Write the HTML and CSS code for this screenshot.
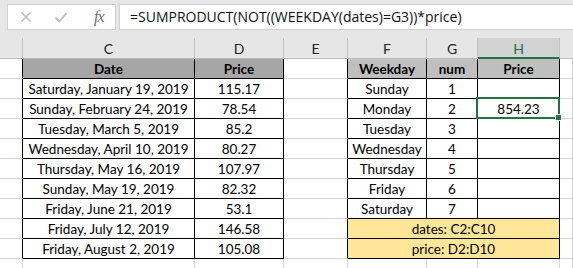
FILE: index.html
```html
<!DOCTYPE html>
<html>
<head>
<meta charset="utf-8">
<link rel="stylesheet" href="styles.css">
</head>
<body>
<div class="topbar">
  <div class="iconbox">
    <svg class="ic" width="20" height="20" viewBox="0 0 20 20"><path d="M5.5 5.5 L14.5 14.5 M14.5 5.5 L5.5 14.5" stroke="#bdbdbd" stroke-width="1.6" fill="none"/></svg>
    <svg class="ic" width="20" height="20" viewBox="0 0 20 20"><path d="M4.5 10.5 L8.5 14.5 L15.5 6" stroke="#bdbdbd" stroke-width="1.8" fill="none"/></svg>
    <span class="fx">fx</span>
  </div>
  <div class="formula">=SUMPRODUCT(NOT((WEEKDAY(dates)=G3))*price)</div>
</div>
<div class="sheet">
  <div class="ch"></div><div class="ch">C</div><div class="ch">D</div><div class="ch">E</div><div class="ch">F</div><div class="ch">G</div><div class="ch sel">H</div><div class="ch last"></div>

  <div class="c rb"></div><div class="c rb bb hd">Date</div><div class="c rb bb hd">Price</div><div class="c rb"></div><div class="c rb bb hd2">Weekday</div><div class="c rb bb hd2">num</div><div class="c rb bb hd2">Price</div><div class="c"></div>

  <div class="c rb"></div><div class="c rb bb">Saturday, January 19, 2019</div><div class="c rb bb">115.17</div><div class="c rb"></div><div class="c rb bb">Sunday</div><div class="c rb bb">1</div><div class="c rb bb"></div><div class="c"></div>

  <div class="c rb"></div><div class="c rb bb">Sunday, February 24, 2019</div><div class="c rb bb">78.54</div><div class="c rb"></div><div class="c rb bb">Monday</div><div class="c rb bb">2</div><div class="c rb bb active">854.23<span class="selbox"><span class="handle"></span></span></div><div class="c"></div>

  <div class="c rb"></div><div class="c rb bb">Tuesday, March 5, 2019</div><div class="c rb bb">85.2</div><div class="c rb"></div><div class="c rb bb">Tuesday</div><div class="c rb bb">3</div><div class="c rb bb"></div><div class="c"></div>

  <div class="c rb"></div><div class="c rb bb">Wednesday, April 10, 2019</div><div class="c rb bb">80.27</div><div class="c rb"></div><div class="c rb bb">Wednesday</div><div class="c rb bb">4</div><div class="c rb bb"></div><div class="c"></div>

  <div class="c rb"></div><div class="c rb bb">Thursday, May 16, 2019</div><div class="c rb bb">107.97</div><div class="c rb"></div><div class="c rb bb">Thursday</div><div class="c rb bb">5</div><div class="c rb bb"></div><div class="c"></div>

  <div class="c rb"></div><div class="c rb bb">Sunday, May 19, 2019</div><div class="c rb bb">82.32</div><div class="c rb"></div><div class="c rb bb">Friday</div><div class="c rb bb">6</div><div class="c rb bb"></div><div class="c"></div>

  <div class="c rb"></div><div class="c rb bb">Friday, June 21, 2019</div><div class="c rb bb">53.1</div><div class="c rb"></div><div class="c rb bb">Saturday</div><div class="c rb bb">7</div><div class="c rb bb"></div><div class="c"></div>

  <div class="c rb"></div><div class="c rb bb">Friday, July 12, 2019</div><div class="c rb bb">146.58</div><div class="c rb"></div><div class="c rb bb note span3">dates: C2:C10</div><div class="c"></div>

  <div class="c rb"></div><div class="c rb bb">Friday, August 2, 2019</div><div class="c rb bb">105.08</div><div class="c rb"></div><div class="c rb bb note span3">price: D2:D10</div><div class="c"></div>

  <div class="c"></div><div class="c"></div><div class="c"></div><div class="c"></div><div class="c"></div><div class="c"></div><div class="c"></div><div class="c"></div>
</div>
</body>
</html>
```
FILE: styles.css
```css
html, body {
  margin: 0;
  padding: 0;
  background: #ffffff;
  overflow: hidden;
}
body {
  width: 573px;
  height: 268px;
  font-family: Lato, "Liberation Sans", sans-serif;
}
.topbar {
  height: 38px;
  background: #e6e6e6;
  display: flex;
  align-items: flex-start;
  padding: 4px 0 0 7px;
  box-sizing: border-box;
}
.iconbox {
  width: 109px;
  height: 26px;
  box-sizing: border-box;
  background: #fff;
  border: 1px solid #d0d0d0;
  display: flex;
  align-items: center;
  padding-left: 8px;
  gap: 15px;
}
.ic {
  display: block;
}
.fx {
  font-family: "Liberation Serif", serif;
  font-style: italic;
  font-size: 16px;
  color: #6e6e6e;
  margin-left: 8px;
  letter-spacing: -1px;
}
.formula {
  margin-left: 3px;
  flex: 1;
  height: 26px;
  box-sizing: border-box;
  background: #fff;
  border: 1px solid #d0d0d0;
  border-right: none;
  font-family: "Open Sans", "Noto Sans", sans-serif;
  font-size: 14px;
  line-height: 24px;
  padding-left: 10px;
  color: #111;
  white-space: nowrap;
}
.sheet {
  display: grid;
  grid-template-columns: 23px 172px 89px 64px 79px 51px 82px 1fr;
  grid-template-rows: 21px repeat(10, 20px) 20px;
}
.ch {
  background: #e6e6e6;
  border-right: 1px solid #c4c4c4;
  border-bottom: 1px solid #bcbcbc;
  box-sizing: border-box;
  font-size: 14px;
  color: #222;
  display: flex;
  align-items: center;
  justify-content: center;
  padding-top: 1px;
}
.ch.last {
  border-right: none;
}
.ch.sel {
  background: #d2d2d2;
  color: #217346;
  border-bottom: 2px solid #217346;
}
.c {
  box-sizing: border-box;
  border-right: 1px solid #d4d4d4;
  border-bottom: 1px solid #d4d4d4;
  display: flex;
  align-items: center;
  justify-content: center;
  font-size: 13.5px;
  color: #000;
  white-space: nowrap;
  padding-top: 1px;
}
.rb {
  border-right-color: #000;
}
.bb {
  border-bottom-color: #000;
}
.hd {
  background: #a6a6a6;
  font-weight: bold;
}
.hd2 {
  background: #bfbfbf;
  font-weight: bold;
}
.note {
  background: #ffe699;
}
.span3 {
  grid-column: span 3;
}
.active {
  position: relative;
}
.selbox {
  position: absolute;
  left: -2px;
  top: -2px;
  right: -1px;
  bottom: -1px;
  border: 2px solid #217346;
}
.handle {
  position: absolute;
  right: -4px;
  bottom: -4px;
  width: 5px;
  height: 5px;
  background: #217346;
  border: 1px solid #fff;
}
```
